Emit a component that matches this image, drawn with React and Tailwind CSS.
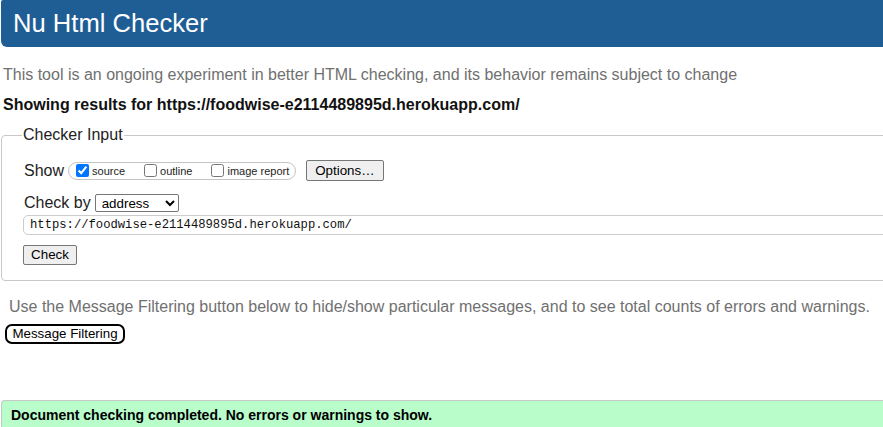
import React from 'react';

const URL = 'https://foodwise-e2114489895d.herokuapp.com/';

function Header() {
  return (
    <div className="h-[47px] bg-[#1f5e95] rounded-bl-[6px] rounded-tl-[2px] flex items-center pl-[12px] pt-[1px]">
      <h1 className="text-white text-[25.6px] leading-none">Nu Html Checker</h1>
    </div>
  );
}

function ShowOptions() {
  const items = [
    { label: 'source', checked: true },
    { label: 'outline', checked: false },
    { label: 'image report', checked: false },
  ];
  return (
    <div className="flex items-center h-[21px]">
      <span className="text-[16px] leading-none text-[#222] ml-[1px]">Show</span>
      <span className="ml-[4px] h-[18px] border border-[#c4c4c4] rounded-[9px] flex items-center pl-[3px] pr-[6px] gap-[15px]">
        {items.map(it => (
          <label key={it.label} className="flex items-center text-[11px] leading-none text-[#222]">
            <input type="checkbox" defaultChecked={it.checked} className="w-[13px] h-[13px] ml-[4px] mr-[3px] my-0" />
            <span className="mt-[2px]">{it.label}</span>
          </label>
        ))}
      </span>
      <button className="ml-[10px] h-[21px] px-[8px] bg-[#efefef] border border-[#767676] rounded-[2px] text-[13.33px] leading-none text-black">
        Options…
      </button>
    </div>
  );
}

export default function App() {
  return (
    <div
      className="w-[883px] h-[427px] overflow-hidden bg-white"
      style={{ fontFamily: '"Liberation Sans", Arial, sans-serif' }}
    >
      <div className="w-[900px] pl-[1px]">
        <Header />

        <p className="mt-[19px] ml-[2px] text-[16px] leading-[18px] text-[#707070]">
          This tool is an ongoing experiment in better HTML checking, and its behavior remains subject to change
        </p>
        <p className="mt-[12px] ml-[2px] text-[16px] leading-[18px] font-bold text-[#111]">
          Showing results for {URL}
        </p>

        <fieldset className="mt-[12px] border border-[#c8c8c8] rounded-[4px] pl-[21px] pt-[16px] pb-[15px]">
          <legend className="ml-[-1px] px-[1px] text-[16px] leading-[18px] text-[#222]">Checker Input</legend>

          <ShowOptions />

          <div className="mt-[12px] flex items-center h-[19px]">
            <span className="text-[16px] leading-none text-[#222] ml-[1px]">Check by</span>
            <select
              defaultValue="address"
              className="ml-[4px] w-[84px] h-[18px] border border-[#767676] rounded-[2px] bg-white text-[13.33px] leading-none text-black pl-[2px]"
            >
              <option value="address">address</option>
              <option value="file">file upload</option>
              <option value="text">text input</option>
            </select>
          </div>

          <input
            type="text"
            readOnly
            value={URL}
            className="mt-[3px] block w-[880px] h-[20px] border border-[#cccccc] rounded-[5px] pl-[6px] text-[12.2px] text-[#111]"
            style={{ fontFamily: '"Liberation Mono", "Courier New", monospace' }}
          />

          <button className="mt-[10px] block h-[20px] w-[54px] bg-[#efefef] border border-[#767676] rounded-[2px] text-[13.33px] leading-none text-black">
            Check
          </button>
        </fieldset>

        <p className="mt-[17px] ml-[8px] text-[16px] leading-[18px] text-[#707070]">
          Use the Message Filtering button below to hide/show particular messages, and to see total counts of errors and warnings.
        </p>
        <button className="mt-[8px] ml-[4px] block h-[20px] w-[120px] bg-white border-2 border-black rounded-[7px] text-[13.33px] leading-none text-black">
          Message Filtering
        </button>

        <div className="mt-[56px] h-[40px] bg-[#b9fdcb] border-t border-l border-[#c8c8c8] rounded-tl-[4px] pl-[9px] pt-[6px]">
          <p className="text-[14px] leading-[16px] font-bold text-black">
            Document checking completed. No errors or warnings to show.
          </p>
        </div>
      </div>
    </div>
  );
}
